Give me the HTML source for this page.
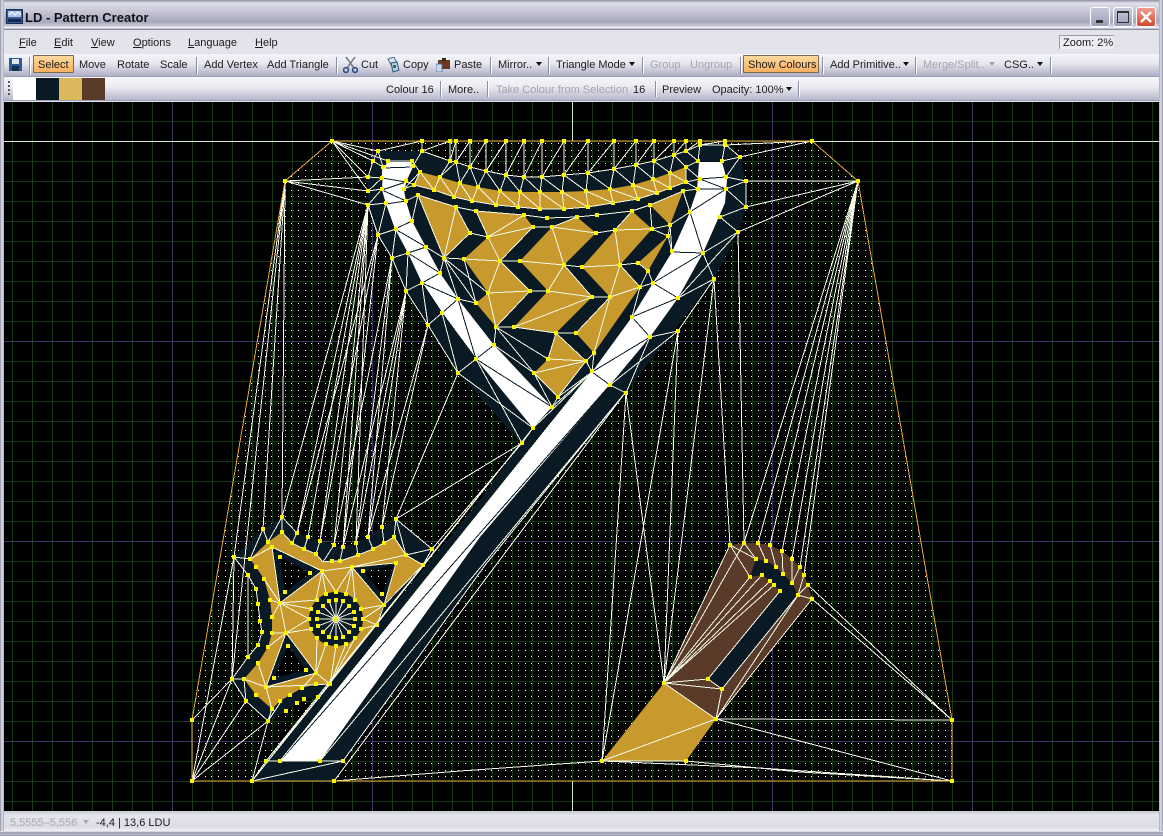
<!DOCTYPE html>
<html><head><meta charset="utf-8"><title>LD - Pattern Creator</title>
<style>
html,body{margin:0;padding:0;background:#b4b4c6}
#w{position:relative;width:1163px;height:836px;overflow:hidden;font:11px "Liberation Sans",sans-serif;color:#1c1c1c;background:#e3e3ec}
.a{position:absolute}
.t{position:absolute;white-space:nowrap;line-height:14px}
.g{color:#a4a4ae}
.s{position:absolute;width:1px;background:#8c8ca4;border-right:1px solid #fff}
.d{position:absolute;width:0;height:0;border:3px solid transparent;border-top:4px solid #111;border-bottom:0}
.dg{border-top-color:#a4a4ae}
.u{text-decoration:underline}
.b{position:absolute;width:20px;height:20px;top:7px;border-radius:3px;border:1px solid #fff;box-sizing:border-box;background:linear-gradient(#c8c8dc,#9c9cb8)}
.o{position:absolute;box-sizing:border-box;height:18px;top:55px;border:1px solid #7a6a50;background:linear-gradient(#ffd9a0,#f8b060);border-radius:1px}
</style></head><body><div id="w">
<div class="a" style="left:0;top:0;width:1163px;height:30px;background:linear-gradient(#8f8fa4 0,#e0e0ea 3px,#d0d0de 8px,#a8a8bc 22px,#c8c8d8 26px,#fff 28px,#8a8aa0 29px)"></div>
<svg class="a" style="left:6px;top:9px" width="17" height="15" viewBox="0 0 17 15"><rect x=".5" y=".5" width="16" height="14" fill="#345a94" stroke="#1c2c50"/><rect x="2" y="2" width="13" height="6" fill="#a8c4e8"/><path d="M3 6l3-3 3 3 3-3 3 3" stroke="#fff" fill="none"/><rect x="2" y="10" width="13" height="3" fill="#14284c"/></svg>
<div class="t" style="left:25px;top:11px;font-size:13px;font-weight:bold;color:#101018">LD - Pattern Creator</div>
<div class="b" style="left:1090px"><div class="a" style="left:5px;top:12px;width:7px;height:3px;background:#333"></div></div>
<div class="b" style="left:1113px"><div class="a" style="left:3px;top:3px;width:12px;height:12px;box-sizing:border-box;border:1px solid #333;border-top-width:2px"></div></div>
<div class="b" style="left:1136px;background:linear-gradient(#f0a090,#d04830)"><svg class="a" style="left:2px;top:2px" width="14" height="14"><path d="M2 2L12 12M12 2L2 12" stroke="#fff" stroke-width="2.4"/></svg></div>

<div class="t" style="left:19px;top:36px"><span class="u">F</span>ile</div>
<div class="t" style="left:54px;top:36px"><span class="u">E</span>dit</div>
<div class="t" style="left:91px;top:36px"><span class="u">V</span>iew</div>
<div class="t" style="left:133px;top:36px"><span class="u">O</span>ptions</div>
<div class="t" style="left:188px;top:36px"><span class="u">L</span>anguage</div>
<div class="t" style="left:255px;top:36px"><span class="u">H</span>elp</div>
<div class="a" style="left:1059px;top:35px;width:55px;height:14px;background:#ececf2;border-left:1px solid #9a9aa8;border-top:1px solid #9a9aa8;box-sizing:border-box"></div>
<div class="t" style="left:1063px;top:36px">Zoom: 2%</div>

<div class="a" style="left:4px;top:54px;width:1155px;height:23px;background:linear-gradient(#f4f4fa,#e8e8f0 40%,#b0b0c6 95%,#8c8ca4)"></div>
<div class="a" style="left:4px;top:77px;width:1155px;height:24px;background:linear-gradient(#f6f6fb,#ebebf2 40%,#b8b8cc 95%,#8c8ca4)"></div>
<svg class="a" style="left:9px;top:58px" width="13" height="13"><rect width="13" height="13" fill="#2a5c94"/><rect x="3" y="1" width="7" height="5" fill="#dfe8f2"/><rect x="3" y="8" width="7" height="5" fill="#16304c"/></svg>
<div class="s" style="left:29px;top:57px;height:17px"></div>
<div class="o" style="left:33px;width:41px"></div><div class="t" style="left:38px;top:58px">Select</div>
<div class="t" style="left:79px;top:58px">Move</div>
<div class="t" style="left:117px;top:58px">Rotate</div>
<div class="t" style="left:160px;top:58px">Scale</div>
<div class="s" style="left:196px;top:57px;height:17px"></div>
<div class="t" style="left:204px;top:58px">Add Vertex</div>
<div class="t" style="left:267px;top:58px">Add Triangle</div>
<div class="s" style="left:336px;top:57px;height:17px"></div>
<svg class="a" style="left:343px;top:56px" width="15" height="18"><path d="M3 1L11 12M12 1L4 12" stroke="#707078" stroke-width="1.4"/><circle cx="3" cy="14" r="2.4" fill="none" stroke="#284c80" stroke-width="1.5"/><circle cx="12" cy="14" r="2.4" fill="none" stroke="#284c80" stroke-width="1.5"/></svg>
<div class="t" style="left:361px;top:58px">Cut</div>
<svg class="a" style="left:387px;top:57px" width="13" height="16"><path d="M1 2l6-2 3 6-6 2z" fill="#d8e4f0" stroke="#507090"/><path d="M4 6l6-1 2 8-6 2z" fill="#b8d0e8" stroke="#305878"/><rect x="6" y="8" width="3" height="3" fill="#2c6c5c"/></svg>
<div class="t" style="left:403px;top:58px">Copy</div>
<svg class="a" style="left:436px;top:58px" width="15" height="14"><rect x="2" y="2" width="12" height="9" fill="#6a3a20"/><rect x="6" y="0" width="4" height="3" fill="#3c2414"/><rect x="0" y="6" width="6" height="8" fill="#c8d8ec" stroke="#4c6c98" stroke-width=".8"/></svg>
<div class="t" style="left:454px;top:58px">Paste</div>
<div class="s" style="left:490px;top:57px;height:17px"></div>
<div class="t" style="left:498px;top:58px">Mirror..</div><div class="d" style="left:536px;top:62px"></div>
<div class="s" style="left:548px;top:57px;height:17px"></div>
<div class="t" style="left:556px;top:58px">Triangle Mode</div><div class="d" style="left:629px;top:62px"></div>
<div class="s" style="left:642px;top:57px;height:17px"></div>
<div class="t g" style="left:650px;top:58px">Group</div>
<div class="t g" style="left:690px;top:58px">Ungroup</div>
<div class="s" style="left:740px;top:57px;height:17px"></div>
<div class="o" style="left:743px;width:76px"></div><div class="t" style="left:748px;top:58px">Show Colours</div>
<div class="s" style="left:822px;top:57px;height:17px"></div>
<div class="t" style="left:830px;top:58px">Add Primitive..</div><div class="d" style="left:903px;top:62px"></div>
<div class="s" style="left:915px;top:57px;height:17px"></div>
<div class="t g" style="left:923px;top:58px">Merge/Split..</div><div class="d dg" style="left:989px;top:62px"></div>
<div class="t" style="left:1004px;top:58px">CSG..</div><div class="d" style="left:1037px;top:62px"></div>
<div class="s" style="left:1050px;top:57px;height:17px"></div>

<div class="a" style="left:8px;top:81px;width:2px;height:16px;background:repeating-linear-gradient(#555 0 2px,transparent 2px 4px)"></div>
<div class="a" style="left:13px;top:78px;width:23px;height:22px;background:#fff"></div>
<div class="a" style="left:36px;top:78px;width:23px;height:22px;background:#0a1a24"></div>
<div class="a" style="left:59px;top:78px;width:23px;height:22px;background:#dcb85c"></div>
<div class="a" style="left:82px;top:78px;width:23px;height:22px;background:#5a3a28"></div>
<div class="t" style="left:386px;top:83px">Colour 16</div>
<div class="s" style="left:440px;top:81px;height:16px"></div>
<div class="t" style="left:448px;top:83px">More..</div>
<div class="s" style="left:487px;top:81px;height:16px"></div>
<div class="t g" style="left:496px;top:83px">Take Colour from Selection</div>
<div class="t" style="left:633px;top:83px">16</div>
<div class="s" style="left:655px;top:81px;height:16px"></div>
<div class="t" style="left:662px;top:83px">Preview</div>
<div class="t" style="left:712px;top:83px">Opacity: 100%</div><div class="d" style="left:786px;top:87px"></div>
<div class="s" style="left:798px;top:81px;height:16px"></div>

<div class="a" style="left:0;top:0;width:4px;height:836px;background:linear-gradient(90deg,#8f8fa4,#e0e0ea 2px,#a8a8bc)"></div>
<div class="a" style="left:1159px;top:0;width:4px;height:836px;background:linear-gradient(90deg,#a8a8bc,#e0e0ea 2px,#8f8fa4)"></div>

<svg class="a" style="left:0;top:0" width="1163" height="836" viewBox="0 0 1163 836">
<defs>
<pattern id="gr" x="12" y="1" width="20" height="20" patternUnits="userSpaceOnUse"><path d="M.5 0V20M0 .5H20" stroke="#163a16" fill="none" shape-rendering="crispEdges"/></pattern>
<pattern id="dt" x="18" y="3" width="20" height="20" patternUnits="userSpaceOnUse"><path d="M0 0h1v1H0zM7 0h1v1H7zM13 0h1v1h-1zM0 7h1v1H0zM7 7h1v1H7zM13 7h1v1h-1zM0 13h1v1H0zM7 13h1v1H7zM13 13h1v1h-1z" fill="#fff"/></pattern>
<clipPath id="cv"><rect x="4" y="102" width="1155" height="709"/></clipPath>
</defs>
<g clip-path="url(#cv)">
<rect x="4" y="102" width="1155" height="709" fill="#000"/>
<rect x="4" y="102" width="1155" height="709" fill="url(#gr)"/>
<path d="M172.5 102V811M372.5 102V811M772.5 102V811M972.5 102V811M4 341.5H1159M4 541.5H1159M4 741.5H1159" stroke="#3a3860" fill="none" shape-rendering="crispEdges"/>
<path d="M332 141L812 141 858 181 952 720 952 781 192 781 192 720 285 181Z" fill="url(#dt)"/>
<path d="M4 141.5H332M812 141.5H1159M572.5 102V141M572.5 781V811" stroke="#d0ecc8" fill="none" shape-rendering="crispEdges"/>

<!-- navy collar and strap -->
<path fill="#0a1a24" d="M378 151L422 151 450 161 456 162 470 167 486 171 506 175 524 177 542 177 564 175 588 173 614 169 636 165 654 161 674 155 686 151 700 144 725 144 740 157 746 180 746 208 738 232 714 279 625 393 486 564 343 761 334 781 252 781 266 761 480 500 521 443 458 372 428 325 406 290 392 258 378 235 368 205 368 177 373 160Z"/>
<!-- white V -->
<path fill="#fff" d="M388 162L411 162 413 167 406 182 404 190 406 201 412 221 426 247 440 273 458 299 494 345 552 407 533 428 476 359 442 313 422 283 408 253 395 229 386 204 382 190 383 168Z"/>
<!-- white strap -->
<path fill="#fff" d="M699 162L722 162 727 180 725 203 703 253 678 298 650 337 610 385 480 537 320 761 280 761 476 517 592 372 632 317 653 283 672 252 690 212 697 190Z"/>
<!-- gold collar -->
<path fill="#c8992c" d="M420 172L440 177 460 183 478 187 500 191 520 192 540 192 562 192 586 191 610 189 633 185 653 179 670 173 686 167 686 182 657 193 638 199 613 203 588 207 564 209 540 209 518 207 496 205 472 201 454 197 434 190 414 185Z"/>
<!-- gold panel -->
<g fill="#c8992c">
<path d="M418 195L456 207 470 233 444 258Z"/>
<path d="M476 211L524 215 533 227 500 261 530 291 496 327 476 303 488 293 486 290 464 259 488 237Z"/>
<path d="M520 261L552 227 577 217 596 233 564 265 592 297 556 333 514 327 548 291Z"/>
<path d="M556 333L586 361 558 397 534 373 548 359Z"/>
<path d="M615 230L632 211 652 229 620 265 640 287 594 353 576 333 610 297 582 267Z"/>
<path d="M650 205L683 191 670 225Z"/>
<path d="M638 263L668 236 648 271Z"/>
</g>
<!-- emblem -->
<path fill="#0a1a24" d="M234 557L263 529 282 517 297 533 308 537 320 541 334 545 343 547 356 543 368 537 382 527 396 519 432 549 423 565 330 684 318 697 304 699 297 703 286 711 268 721 246 701 232 679 248 657 258 645 262 632 260 621 258 604 256 589 248 575Z"/>
<path fill="#c8992c" d="M282 532L292 543 304 549 316 554 323 562 332 561 340 561 358 555 373 549 384 543 394 537 406 555 423 565 383 605 377 625 330 684 316 684 302 688 290 695 280 701 272 709 256 695 244 679 258 663 268 647 272 633 272 617 270 600 264 579 256 567 250 559 268 542Z"/>
<path fill="#0a1a24" d="M272 547L322 571 280 603Z"/><path fill="#000" d="M280 557L310 573 285 592Z"/><path fill="url(#dt)" d="M280 557L310 573 285 592Z"/>
<path fill="#0a1a24" d="M353 568L396 563 384 605Z"/><path fill="#000" d="M363 571L393 566 382 594Z"/><path fill="url(#dt)" d="M363 571L393 566 382 594Z"/>
<path fill="#0a1a24" d="M286 633L316 673 266 687Z"/><path fill="#000" d="M288 646L306 670 274 678Z"/><path fill="url(#dt)" d="M288 646L306 670 274 678Z"/>
<circle cx="336" cy="619" r="27" fill="#0a1a24"/>
<!-- brown tool -->
<path fill="#5a3a28" d="M664 683L730 545 744 543 758 543 770 545 782 551 792 559 800 567 804 575 808 585 812 599 716 719Z"/>
<path fill="#0a1a24" d="M708 679L780 591 798 595 722 689Z"/>
<path fill="#0a1a24" d="M756 559L766 561 776 567 783 574 792 583 798 595 780 591 770 581 762 575 750 577Z"/>
<path fill="#c8992c" d="M664 683L716 719 686 761 602 761Z"/>

<!-- black mesh on white -->
<path fill="none" stroke="#0a1a24" shape-rendering="crispEdges" d="M280 761L610 385M476 359L494 345M476 359L552 407M442 313L458 299M442 313L476 359M458 299L476 359M422 283L440 273M422 283L458 299M422 283L442 313M408 253L426 247M408 253L440 273M395 229L412 221M395 229L426 247M386 204L406 201M382 190L406 182M382 190L406 201M383 168L413 167M382 178L406 182M703 253L672 252M703 253L690 212M690 212L726 189M698 189L726 189M700 179L726 177M700 179L726 189M653 283L703 253M653 283L678 298M632 317L678 298M632 317L650 337M592 372L650 337M592 372L610 385"/>

<!-- white mesh -->
<path fill="none" stroke="#f6faea" shape-rendering="crispEdges" d="
M378 151L422 141 422 151 450 141 450 161 456 141 456 162 470 141 470 167 486 141 486 171 506 141 506 175 524 141 524 177 542 141 542 177 564 141 564 175 588 141 588 173 614 141 614 169 636 141 636 165 654 141 654 161 674 141 674 155 686 141 686 151 700 141 700 145 725 141 725 145
M422 151L450 161 456 162 470 167 486 171 506 175 524 177 542 177 564 175 588 173 614 169 636 165 654 161 674 155 686 151 700 145 725 145
M450 161L440 177 456 162 460 183 470 167 478 187 486 171 500 191 506 175 520 192 524 177 540 192 542 177 562 192 564 175 586 191 588 173 610 189 614 169 633 185 636 165 653 179 654 161 670 173 674 155 686 167
M414 185L420 172 434 190 440 177 454 197 460 183 472 201 478 187 496 205 500 191 518 207 520 192 540 209 540 192 564 209 562 192 588 207 586 191 613 203 610 189 638 199 633 185 657 193 653 179 670 188 670 173 686 182 686 167
M414 185L434 190 454 197 472 201 496 205 518 207 540 209 564 209 588 207 613 203 638 199 657 193 686 182
M418 195L456 207 476 211 524 215 547 218 577 217 597 215 632 211 650 205 683 191
M456 207L444 258M418 195L444 258M444 258L470 233M456 207L470 233M470 233L488 237M476 211L488 237M488 237L524 215M488 237L533 227M488 237L500 261M464 259L500 261M500 261L530 291M500 261L488 293M488 293L530 291M488 293L496 327M530 291L496 327M500 261L533 227
M520 261L564 265M552 227L577 217M552 227L596 233M552 227L564 265M564 265L548 291M564 265L592 297M548 291L592 297M514 327L592 297M514 327L556 333M556 333L548 359M548 359L586 361M534 373L586 361M556 333L586 361M533 227L552 227M520 261L500 261M548 291L530 291M514 327L496 327
M615 230L632 211M615 230L652 229M615 230L620 265M582 267L620 265M620 265L610 297M620 265L640 287M610 297L640 287M610 297L576 333M610 297L594 353M592 297L610 297M596 233L615 230M564 265L582 267M556 333L576 333M586 361L594 353
M444 258L476 303M444 258L488 293M444 258L464 259M464 259L476 303M496 327L548 359M496 327L534 373M534 373L558 397M534 373L552 407M558 397L586 361M558 397L592 372M594 353L592 372M586 361L592 372M640 287L632 317M640 287L653 283M648 271L653 283M648 271L640 287M638 263L620 265M638 263L648 271M668 236L672 252M668 236L652 229M670 225L652 229M670 225L690 212M683 191L690 212M670 225L668 236M650 205L652 229M632 211L650 205
M368 177L373 161 378 151 383 167 373 161M368 177L382 178 368 191 382 189 368 205 386 203 378 235 396 229 392 258 408 253 406 291 422 283 428 325 442 313 458 373 476 359 522 443 533 428 458 373M368 205L378 235 392 258 406 291 428 325 458 373M378 235L368 205M383 167L382 178M388 161L412 161M388 161L382 178M412 161L404 189M404 189L414 185M404 189L420 172M412 161L420 172M413 166L422 151M406 181L414 185M406 201L418 195M412 221L418 195M426 247L444 258M440 273L444 258M458 299L476 303M458 299L444 258M494 345L496 327M494 345L534 373M552 407L534 373M552 407L558 397
M700 144L698 161M725 144L722 161M725 144L740 157M722 161L740 157M726 177L740 157M726 177L746 181M726 189L746 181M726 189L746 207M746 181L746 207M720 217L746 207M720 217L738 232M703 253L738 232M703 253L714 279M678 298L714 279M678 331L714 279M650 337L678 331M650 337L626 393M610 385L678 331M610 385L626 393M678 298L738 232M686 151L698 161M686 167L698 161M686 167L700 179M686 182L698 189M686 182L700 179M683 191L698 189M690 212L698 189M672 252L670 225M672 252L668 236
M266 761L521 443M266 761L533 428M252 781L521 443M266 761L343 761M252 781L343 761M334 781L625 393M343 761L486 564 625 393M320 761L625 393M280 761L592 372M592 372L552 407M592 372L533 428
M332 141L368 177M332 141L373 161M332 141L378 151M332 141L422 141M332 141L368 191M332 141L388 161M285 181L368 177M285 181L368 191M285 181L368 205M285 181L282 517M285 181L234 557M285 181L232 679M285 181L192 720M285 181L263 529
M368 205L282 517M368 205L297 533M368 205L308 537M368 205L320 541M368 205L334 545M368 205L343 547M368 205L356 543
M378 235L297 533M378 235L320 541M378 235L343 547M392 258L334 545M392 258L356 543M392 258L368 537M406 291L343 547M406 291L356 543M406 291L368 537M406 291L382 527M428 325L382 527M428 325L368 537M458 373L396 519M522 443L396 519M522 443L432 549
M812 141L725 145M812 141L740 157M858 181L746 181M858 181L746 207M858 181L738 232M858 181L744 543M858 181L758 543M858 181L770 545M858 181L782 551M858 181L792 559M858 181L800 567M858 181L804 575
M738 232L744 543M714 279L730 545M714 279L664 683M678 331L664 683M626 393L664 683M626 393L602 761M678 331L602 761
M808 585L952 720M812 599L952 720M716 719L952 720M716 719L952 781M602 761L760 768 952 781M686 761L800 772 952 781M602 761L686 761M334 781L460 771 602 761
M192 720L232 679M192 781L232 679M192 781L246 701M192 781L268 721M252 781L268 721M252 781L266 761M192 781L234 557M192 781L252 781M232 679L248 657M248 575L248 657M234 557L248 575M234 557L232 679M268 721L282 700M268 721L246 701M232 679L246 701M232 679L244 679M246 701L244 679M268 721L272 709M252 781L330 684M266 761L330 684
M234 557L250 559M263 529L250 559M263 529L268 542M282 517L268 542M282 517L282 532M282 517L297 533M297 533L292 543M308 537L304 549M320 541L316 554M334 545L323 562M343 547L340 561M356 543L358 555M368 537L373 549M382 527L384 543M396 519L394 537M396 519L432 549M396 519L406 555M432 549L406 555M432 549L423 565
M282 532L292 543 304 549 316 554 323 562 332 561 340 561 358 555 373 549 384 543 394 537 406 555 423 565M250 559L272 547M272 547L322 571 280 603 272 547M322 571L352 567 406 555M352 567L396 563 384 605 352 567M423 565L384 605M384 605L377 625M280 603L286 633 316 673 266 687 286 633M266 687L330 684 316 673M266 687L272 709M266 687L244 679M264 579L280 603M270 600L280 603M272 617L280 603M272 633L286 633M268 647L286 633M258 663L266 687M302 688L316 673M322 571L316 600M322 571L326 594M322 571L336 592M352 567L336 592M352 567L346 594M352 567L355 600M384 605L361 609M384 605L363 619M377 625L363 619M377 625L361 629M280 603L311 609M280 603L309 619M286 633L309 619M286 633L311 629M316 673L317 638M316 673L326 644M330 684L336 646M330 684L346 644M330 684L355 638M280 603L317 600M248 575L256 589 258 604 260 621 262 632 258 645 248 657
M336 619L355 619M336 619L354 626M336 619L349 632M336 619L343 637M336 619L336 638M336 619L329 637M336 619L323 632M336 619L318 626M336 619L317 619M336 619L318 612M336 619L323 606M336 619L329 601M336 619L336 600M336 619L343 601M336 619L349 606M336 619L354 612
M664 683L730 545M730 545L750 577M730 545L756 559M664 683L750 577M664 683L762 575M664 683L770 581M664 683L774 585M664 683L708 679M664 683L722 689M664 683L716 719M602 761L716 719M708 679L722 689M722 689L716 719M708 679L780 591M722 689L798 595M716 719L812 599M716 719L798 595M744 543L756 559M758 543L766 561M770 545L776 567M782 551L783 574M792 559L792 583M800 567L792 583M804 575L798 595M808 585L798 595M812 599L798 595M664 683L744 543"/>

<!-- outline -->
<path fill="none" stroke="#e8a83c" shape-rendering="crispEdges" d="M332 141H812L858 181 952 720V781H192V720L285 181 332 141Z"/>

<!-- vertices -->
<path fill="none" stroke="#f8f400" stroke-width="4" stroke-linecap="square" shape-rendering="crispEdges" d="
M332 141h.1M422 141h.1M450 141h.1M456 141h.1M470 141h.1M486 141h.1M506 141h.1M524 141h.1M542 141h.1M564 141h.1M588 141h.1M614 141h.1M636 141h.1M654 141h.1M674 141h.1M686 141h.1M700 141h.1M725 141h.1M812 141h.1M285 181h.1M858 181h.1
M378 151h.1M422 151h.1M450 161h.1M456 162h.1M470 167h.1M486 171h.1M506 175h.1M524 177h.1M542 177h.1M564 175h.1M588 173h.1M614 169h.1M636 165h.1M654 161h.1M674 155h.1M686 151h.1M700 145h.1M725 145h.1
M420 172h.1M440 177h.1M460 183h.1M478 187h.1M500 191h.1M520 192h.1M540 192h.1M562 192h.1M586 191h.1M610 189h.1M633 185h.1M653 179h.1M670 173h.1M686 167h.1M686 182h.1
M414 185h.1M434 190h.1M454 197h.1M472 201h.1M496 205h.1M518 207h.1M540 209h.1M564 209h.1M588 207h.1M613 203h.1M638 199h.1M657 193h.1M670 188h.1
M418 195h.1M456 207h.1M470 233h.1M444 258h.1M476 211h.1M524 215h.1M533 227h.1M488 237h.1M464 259h.1M500 261h.1M488 293h.1M530 291h.1M476 303h.1M496 327h.1M520 261h.1M552 227h.1M547 218h.1M577 217h.1M596 233h.1M564 265h.1M548 291h.1M592 297h.1M514 327h.1M556 333h.1M548 359h.1M586 361h.1M534 373h.1M558 397h.1M576 333h.1M594 353h.1M610 297h.1M582 267h.1M620 265h.1M615 230h.1M652 229h.1M632 211h.1M597 215h.1M640 287h.1M638 263h.1M648 271h.1M668 236h.1M670 225h.1M650 205h.1M683 191h.1
M373 161h.1M383 167h.1M388 161h.1M368 177h.1M368 191h.1M368 205h.1M382 178h.1M382 189h.1M386 203h.1M378 235h.1M396 229h.1M392 258h.1M408 253h.1M406 291h.1M422 283h.1M428 325h.1M442 313h.1M458 373h.1M476 359h.1M522 443h.1M533 428h.1M412 161h.1M413 166h.1M406 181h.1M404 189h.1M406 201h.1M412 221h.1M426 247h.1M440 273h.1M458 299h.1M494 345h.1M552 407h.1
M698 161h.1M722 161h.1M740 157h.1M726 177h.1M700 179h.1M698 189h.1M726 189h.1M746 181h.1M746 207h.1M720 217h.1M738 232h.1M690 212h.1M672 251h.1M703 253h.1M714 279h.1M653 283h.1M678 298h.1M632 317h.1M678 331h.1M650 337h.1M610 385h.1M626 393h.1M592 371h.1
M266 761h.1M280 761h.1M320 761h.1M343 761h.1M252 781h.1M334 781h.1M192 781h.1M192 720h.1M952 720h.1M952 781h.1
M234 557h.1M263 529h.1M282 517h.1M282 532h.1M268 542h.1M250 559h.1M292 543h.1M297 533h.1M308 537h.1M304 549h.1M320 541h.1M316 554h.1M334 545h.1M332 561h.1M340 561h.1M343 547h.1M356 543h.1M358 555h.1M368 537h.1M373 549h.1M382 527h.1M384 543h.1M396 519h.1M394 537h.1M406 555h.1M432 549h.1M423 565h.1M248 575h.1M256 567h.1M256 589h.1M264 579h.1M258 604h.1M270 600h.1M260 621h.1M272 617h.1M262 632h.1M272 633h.1M258 645h.1M268 647h.1M248 657h.1M258 663h.1M232 679h.1M244 679h.1M246 701h.1M256 695h.1M268 721h.1M272 709h.1M286 711h.1M280 701h.1M297 703h.1M290 695h.1M304 699h.1M302 688h.1M318 697h.1M316 684h.1M330 684h.1
M272 547h.1M280 557h.1M310 573h.1M285 592h.1M322 571h.1M352 567h.1M363 571h.1M396 563h.1M382 594h.1M384 605h.1M377 625h.1M280 603h.1M286 633h.1M288 646h.1M306 670h.1M274 678h.1M316 673h.1M266 687h.1
M363 619h.1M361 629h.1M355 638h.1M346 644h.1M336 646h.1M326 644h.1M317 638h.1M311 629h.1M309 619h.1M311 609h.1M317 600h.1M326 594h.1M336 592h.1M346 594h.1M355 600h.1M361 609h.1
M355 619h.1M354 626h.1M349 632h.1M343 637h.1M336 638h.1M329 637h.1M323 632h.1M318 626h.1M317 619h.1M318 612h.1M323 606h.1M329 601h.1M336 600h.1M343 601h.1M349 606h.1M354 612h.1M336 619h.1
M730 545h.1M744 543h.1M758 543h.1M770 545h.1M782 551h.1M792 559h.1M800 567h.1M804 575h.1M808 585h.1M812 599h.1M756 559h.1M766 561h.1M776 567h.1M783 574h.1M792 583h.1M798 595h.1M780 591h.1M774 585h.1M770 581h.1M762 575h.1M750 577h.1M708 679h.1M722 689h.1M664 683h.1M716 719h.1M602 761h.1M686 761h.1"/>
</g>
</svg>

<div class="a" style="left:4px;top:811px;width:1155px;height:20px;background:linear-gradient(#c8c8d4,#e4e4ec 4px,#dcdce6 16px,#f0f0f6)"></div>
<div class="t g" style="left:10px;top:816px;color:#a8a8b0">5,5555–5,556</div><div class="d dg" style="left:83px;top:820px"></div>
<div class="t" style="left:96px;top:816px">-4,4 | 13,6 LDU</div>
<div class="a" style="left:0;top:831px;width:1163px;height:5px;background:linear-gradient(#f4f4f8,#8a8aa0 2px,#c4c4d4 3px,#8f8fa4)"></div>
</div></body></html>
